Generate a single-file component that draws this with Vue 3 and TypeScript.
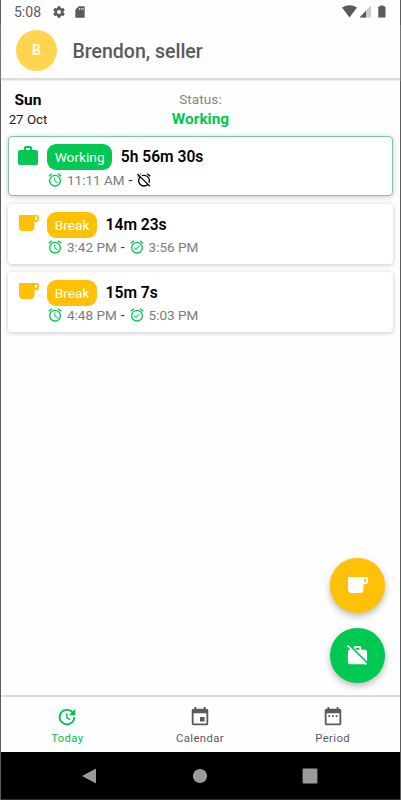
<script setup lang="ts">
interface Entry {
  kind: 'work' | 'break'
  label: string
  duration: string
  start: string
  end: string | null
}

const entries: Entry[] = [
  { kind: 'work', label: 'Working', duration: '5h 56m 30s', start: '11:11 AM', end: null },
  { kind: 'break', label: 'Break', duration: '14m 23s', start: '3:42 PM', end: '3:56 PM' },
  { kind: 'break', label: 'Break', duration: '15m 7s', start: '4:48 PM', end: '5:03 PM' },
]

const icons = {
  gear: 'M12,15.5A3.5,3.5 0 0,1 8.5,12A3.5,3.5 0 0,1 12,8.5A3.5,3.5 0 0,1 15.5,12A3.5,3.5 0 0,1 12,15.5M19.43,12.97C19.47,12.65 19.5,12.33 19.5,12C19.5,11.67 19.47,11.34 19.43,11L21.54,9.37C21.73,9.22 21.78,8.95 21.66,8.73L19.66,5.27C19.54,5.05 19.27,4.96 19.05,5.05L16.56,6.05C16.04,5.66 15.5,5.32 14.87,5.07L14.5,2.42C14.46,2.18 14.25,2 14,2H10C9.75,2 9.54,2.18 9.5,2.42L9.13,5.07C8.5,5.32 7.96,5.66 7.44,6.05L4.95,5.05C4.73,4.96 4.46,5.05 4.34,5.27L2.34,8.73C2.21,8.95 2.27,9.22 2.46,9.37L4.57,11C4.53,11.34 4.5,11.67 4.5,12C4.5,12.33 4.53,12.65 4.57,12.97L2.46,14.63C2.27,14.78 2.21,15.05 2.34,15.27L4.34,18.73C4.46,18.95 4.73,19.03 4.95,18.95L7.44,17.94C7.96,18.34 8.5,18.68 9.13,18.93L9.5,21.58C9.54,21.82 9.75,22 10,22H14C14.25,22 14.46,21.82 14.5,21.58L14.87,18.93C15.5,18.67 16.04,18.34 16.56,17.94L19.05,18.95C19.27,19.03 19.54,18.95 19.66,18.73L21.66,15.27C21.78,15.05 21.73,14.78 21.54,14.63L19.43,12.97Z',
  sd: 'M18,2H10L4,8V20A2,2 0 0,0 6,22H18A2,2 0 0,0 20,20V4A2,2 0 0,0 18,2M12,5V8H10.5V5H12M15,5V8H13.5V5H15M18,5V8H16.5V5H18Z',
  briefcase: 'M10,2H14A2,2 0 0,1 16,4V6H20A2,2 0 0,1 22,8V19A2,2 0 0,1 20,21H4C2.89,21 2,20.1 2,19V8C2,6.89 2.89,6 4,6H8V4C8,2.89 8.89,2 10,2M14,6V4H10V6H14Z',
  briefcaseOff: 'M1,2.27L2.28,1L22,20.72L20.73,22L19.73,21H4C2.89,21 2,20.11 2,19V8C2,6.89 2.89,6 4,6H4.73L1,2.27M22,8V18.18L8.13,4.31C8,4.2 8,4.1 8,4A2,2 0 0,1 10,2H14A2,2 0 0,1 16,4V6H20A2,2 0 0,1 22,8M14,6V4H10V6H14Z',
  cup: 'M1,0H18.5A1.5,1.5 0 0,1 20,1.5V4.5A2.5,2.5 0 0,1 17.5,7H15.5V12A4,4 0 0,1 11.5,16H4A4,4 0 0,1 0,12V1A1,1 0 0,1 1,0M16,1.8V5H17A1.2,1.2 0 0,0 18.2,3.8V1.8Z',
  alarm: 'M12,20A7,7 0 0,1 5,13A7,7 0 0,1 12,6A7,7 0 0,1 19,13A7,7 0 0,1 12,20M12,4A9,9 0 0,0 3,13A9,9 0 0,0 12,22A9,9 0 0,0 21,13A9,9 0 0,0 12,4M12.5,8H11V14L15.75,16.85L16.5,15.62L12.5,13.25V8M7.88,3.39L6.6,1.86L2,5.71L3.29,7.24L7.88,3.39M22,5.72L17.4,1.86L16.11,3.39L20.71,7.25L22,5.72Z',
  alarmCheck: 'M10.54,14.53L8.41,12.4L7.35,13.46L10.53,16.64L16.53,10.64L15.47,9.58L10.54,14.53M12,20A7,7 0 0,1 5,13A7,7 0 0,1 12,6A7,7 0 0,1 19,13A7,7 0 0,1 12,20M12,4A9,9 0 0,0 3,13A9,9 0 0,0 12,22A9,9 0 0,0 21,13A9,9 0 0,0 12,4M7.88,3.39L6.6,1.86L2,5.71L3.29,7.24L7.88,3.39M22,5.72L17.4,1.86L16.11,3.39L20.71,7.25L22,5.72Z',
  alarmOff: 'M8,3.28L6.6,1.86L5.74,2.57L7.16,4M16.47,18.39C15.26,19.39 13.7,20 12,20A7,7 0 0,1 5,13C5,11.3 5.61,9.74 6.61,8.53M2.92,2.29L1.65,3.57L3,4.9L1.87,5.83L3.29,7.25L4.4,6.31L5.2,7.11C3.83,8.69 3,10.75 3,13A9,9 0 0,0 12,22C14.25,22 16.31,21.17 17.89,19.8L20.09,22L21.36,20.73L3.89,3.27L2.92,2.29M22,5.72L17.4,1.86L16.11,3.39L20.71,7.25L22,5.72M12,6A7,7 0 0,1 19,13C19,13.84 18.84,14.65 18.57,15.4L20.09,16.92C20.67,15.73 21,14.41 21,13A9,9 0 0,0 12,4C10.59,4 9.27,4.33 8.08,4.91L9.6,6.43C10.35,6.16 11.16,6 12,6Z',
  update: 'M21,10.12H14.22L16.96,7.3C14.23,4.6 9.81,4.5 7.08,7.2C4.35,9.91 4.35,14.28 7.08,17C9.81,19.7 14.23,19.7 16.96,17C18.32,15.65 19,14.08 19,12.1H21C21,14.08 20.12,16.65 18.36,18.39C14.85,21.87 9.15,21.87 5.64,18.39C2.14,14.92 2.11,9.28 5.62,5.81C9.13,2.34 14.76,2.34 18.27,5.81L21,3V10.12M12.5,8V12.25L16,14.33L15.28,15.54L11,13V8H12.5Z',
  calendar: 'M19,19H5V8H19M16,1V3H8V1H6V3H5C3.89,3 3,3.89 3,5V19A2,2 0 0,0 5,21H19A2,2 0 0,0 21,19V5C21,3.89 20.1,3 19,3H18V1M17,12H12V17H17V12Z',
  period: 'M9,10V12H7V10H9M13,10V12H11V10H13M17,10V12H15V10H17M19,3A2,2 0 0,1 21,5V19A2,2 0 0,1 19,21H5C3.89,21 3,20.1 3,19V5A2,2 0 0,1 5,3H6V1H8V3H16V1H18V3H19M19,19V8H5V19H19Z',
}

const tabs = [
  { name: 'Today', icon: icons.update, active: true },
  { name: 'Calendar', icon: icons.calendar, active: false },
  { name: 'Period', icon: icons.period, active: false },
]
</script>

<template>
  <div class="screen">
    <div class="statusbar">
      <span class="clock">5:08</span>
      <svg class="gear" viewBox="0 0 24 24"><path :d="icons.gear" /></svg>
      <svg class="sd" viewBox="0 0 24 24"><path :d="icons.sd" /></svg>
      <svg class="signals" viewBox="0 0 46 14">
        <path d="M0 2.6Q7.5-2.2 15 2.6L7.5 12.5Z" />
        <path d="M29 .5V12.5H17.5Z" opacity=".3" />
        <path d="M24 5.7V12.5H17.5Z" />
        <path d="M38.2 .5H41.6V1.5H43.5V12.5H36.3V1.5H38.2Z" />
      </svg>
    </div>

    <header class="header">
      <div class="avatar">B</div>
      <h1>Brendon, seller</h1>
    </header>

    <main class="content">
      <section class="summary">
        <div class="date"><strong>Sun</strong><span>27 Oct</span></div>
        <div class="status"><span>Status:</span><strong>Working</strong></div>
        <div></div>
      </section>

      <article v-for="entry in entries" :key="entry.start" class="card" :class="entry.kind">
        <div class="kind-icon">
          <svg v-if="entry.kind === 'work'" class="case" viewBox="0 0 24 24"><path :d="icons.briefcase" /></svg>
          <svg v-else class="cup" viewBox="0 0 20 16"><path fill-rule="evenodd" :d="icons.cup" /></svg>
        </div>
        <div class="details">
          <div class="row">
            <span class="chip">{{ entry.label }}</span>
            <strong class="duration">{{ entry.duration }}</strong>
          </div>
          <div class="times">
            <svg viewBox="0 0 24 24"><path :d="icons.alarm" /></svg>
            <span class="time">{{ entry.start }}</span>
            <span class="dash">-</span>
            <template v-if="entry.end">
              <svg viewBox="0 0 24 24"><path :d="icons.alarmCheck" /></svg>
              <span class="time">{{ entry.end }}</span>
            </template>
            <svg v-else class="off" viewBox="0 0 24 24"><path :d="icons.alarmOff" /></svg>
          </div>
        </div>
      </article>

      <div class="fabs">
        <button class="fab amber" aria-label="Break"><svg class="cup" viewBox="0 0 20 16"><path fill-rule="evenodd" :d="icons.cup" /></svg></button>
        <button class="fab green" aria-label="Stop working"><svg class="case" viewBox="0 0 24 24"><path :d="icons.briefcaseOff" /></svg></button>
      </div>
    </main>

    <nav class="tabs">
      <div v-for="tab in tabs" :key="tab.name" class="tab" :class="{ active: tab.active }">
        <svg viewBox="0 0 24 24"><path :d="tab.icon" /></svg>
        <span>{{ tab.name }}</span>
      </div>
    </nav>

    <div class="sysnav">
      <svg viewBox="0 0 16 16"><path d="M15 .5V15.5L1 8Z" /></svg>
      <svg viewBox="0 0 16 16"><circle cx="8" cy="8" r="7.1" /></svg>
      <svg viewBox="0 0 16 16"><rect x=".6" y=".6" width="14.8" height="14.8" rx="1" /></svg>
    </div>
  </div>
</template>

<style>
body { margin: 0; background: #fff; }
</style>

<style scoped>
.screen {
  box-sizing: border-box;
  width: 401px;
  height: 800px;
  display: flex;
  flex-direction: column;
  border-left: 1px solid #5c5c5c;
  border-right: 1px solid #5c5c5c;
  background: #fefefe;
  font-family: Roboto, "Liberation Sans", sans-serif;
  color: #000;
}
svg { display: block; fill: currentColor; flex: none; }
.statusbar {
  display: flex;
  align-items: center;
  height: 24px;
  flex: none;
  padding: 0 14px 0 13px;
  color: #5a5a5a;
}
.clock { font-size: 14px; width: 37.5px; }
.gear { width: 14px; height: 14px; }
.sd { width: 14px; height: 14px; margin-left: 7.5px; }
.signals { width: 46px; height: 14px; margin-left: auto; margin-right: -2px; }
.header {
  display: flex;
  align-items: center;
  box-sizing: border-box;
  height: 56px;
  flex: none;
  padding: 0 15px 2px;
  border-bottom: 2px solid #dcdcdc;
  box-shadow: 0 1px 1px #f0f0f0;
}
.avatar {
  display: flex;
  align-items: center;
  justify-content: center;
  width: 41px;
  height: 41px;
  border-radius: 50%;
  background: #ffd54f;
  color: #fffbe9;
  font-size: 14px;
  font-weight: 700;
}
h1 { margin: 3px 0 0 15.5px; font-size: 19.5px; line-height: 24px; font-weight: 500; color: #5a5a5a; }
.content {
  position: relative;
  flex: 1;
  display: flex;
  flex-direction: column;
  gap: 7.5px;
  padding: 10px 7px 0;
}
.summary { display: grid; grid-template-columns: 1fr 1fr 1fr; height: 38.5px; }
.date, .status { display: flex; flex-direction: column; align-items: center; }
.date { width: 40px; line-height: 19px; }
.date strong { font-size: 15.5px; font-weight: 700; line-height: 20px; }
.date span { font-size: 13.3px; white-space: nowrap; color: #222; }
.status span { font-size: 13.5px; line-height: 19px; color: #858585; letter-spacing: .1px; }
.status strong { font-size: 15.4px; line-height: 20px; font-weight: 700; color: #00c853; }
.card {
  box-sizing: border-box;
  display: flex;
  height: 60.3px;
  padding: 7px 8px 0 7px;
  border: 1px solid transparent;
  border-radius: 4px;
  background: #fff;
  box-shadow: 0 1px 5px rgba(0, 0, 0, .22);
}
.card.work { border-color: #7acb9d; color: #00c853; }
.card.break { color: #ffc107; }
.kind-icon { width: 31px; flex: none; }
.case { width: 24px; height: 24px; }
.kind-icon .cup { margin: 3.5px 0 0 2.5px; }
.cup { width: 20px; height: 16px; }
.row { display: flex; align-items: center; gap: 8.5px; height: 26px; }
.chip {
  padding: 0 7.7px;
  border-radius: 9px;
  font-size: 13.7px;
  line-height: 26px;
  color: #fff;
  background: #00c853;
}
.break .chip { background: #ffc107; }
.duration { font-size: 15.6px; font-weight: 600; color: #000; }
.times { display: flex; align-items: center; height: 19px; color: #00c853; }
.times svg { width: 16px; height: 16px; }
.time { margin-left: 4px; font-size: 13.5px; color: #7c7c7c; }
.dash { margin: 0 4px; font-size: 14px; color: #333; }
.times .off { color: #000; }
.fabs {
  position: absolute;
  right: 15.5px;
  bottom: 12.5px;
  display: flex;
  flex-direction: column;
  gap: 15.5px;
}
.fab {
  display: flex;
  align-items: center;
  justify-content: center;
  width: 54.5px;
  height: 54.5px;
  padding: 0;
  border: 0;
  border-radius: 50%;
  color: #fff;
  box-shadow: 0 3px 7px rgba(0, 0, 0, .28);
}
.fab .cup { margin-left: 2px; }
.fab .case { width: 23px; height: 23px; }
.fab.amber { background: #ffc107; }
.fab.green { background: #00c853; }
.tabs {
  box-sizing: border-box;
  display: flex;
  height: 57px;
  flex: none;
  border-top: 2.5px solid #dcdcdc;
  padding-right: 1px;
}
.tab {
  flex: 1;
  display: flex;
  flex-direction: column;
  align-items: center;
  padding-top: 9px;
  color: #5a5a5a;
}
.tab svg { width: 22px; height: 22px; }
.tab span { font-size: 11.3px; line-height: 14px; margin-top: 4px; letter-spacing: .4px; }
.tab.active { color: #00bd50; }
.sysnav {
  box-sizing: border-box;
  display: flex;
  align-items: center;
  justify-content: space-between;
  height: 48px;
  flex: none;
  padding: 0 82px 0 80px;
  background: #000;
  border-bottom: 1px solid #333;
  color: #9b9b9b;
}
.sysnav svg { width: 16px; height: 16px; }
</style>
